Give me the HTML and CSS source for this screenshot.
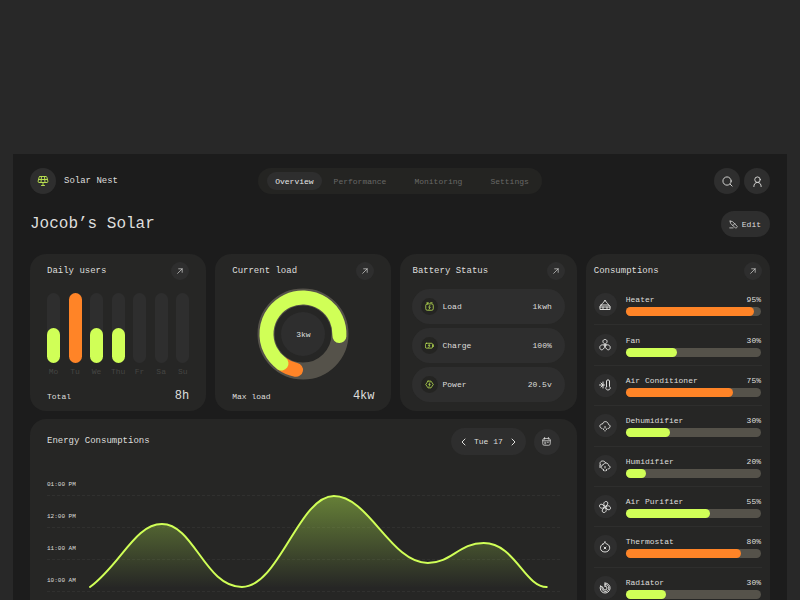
FILE: index.html
```html
<!DOCTYPE html>
<html lang="en">
<head>
    <meta charset="UTF-8">
    <meta name="viewport" content="width=device-width, initial-scale=1.0">
    <title>Solar Nest</title>
    <link rel="stylesheet" href="styles.css">
</head>
<body>
    <!-- shared icons -->
    <svg class="sprite" aria-hidden="true">
        <symbol id="arrow" viewBox="0 0 12 12"><path d="M2.5 9.5 9.3 2.7M4 2.7h5.3V8"/></symbol>
    </svg>

    <div class="app">
        <header class="topbar">
            <div class="brand">
                <span class="logo">
                    <svg viewBox="0 0 24 24"><path d="M6 3h12c1 0 1.600.600 1.800 1.500l2 8c.3 1.400-.5 2.500-1.800 2.500H4c-1.300 0-2.100-1.100-1.800-2.500l2-8C4.400 3.600 5 3 6 3ZM3 9h18M9 3 8 15M15 3l1 12M12 15v6M9 21h6"/></svg>
                </span>
                <span>Solar Nest</span>
            </div>
            <nav class="menu">
                <a class="active" href="#">Overview</a>
                <a href="#">Performance</a>
                <a href="#">Monitoring</a>
                <a href="#">Settings</a>
            </nav>
            <div class="actions">
                <button class="round" aria-label="Search">
                    <svg viewBox="0 0 24 24"><circle cx="11" cy="11" r="9"/><path d="m18 18 4 4"/></svg>
                </button>
                <button class="round" aria-label="Profile">
                    <svg viewBox="0 0 24 24"><circle cx="12" cy="8" r="6"/><path d="M4 23c0-5 3-9 8-9s8 4 8 9"/></svg>
                </button>
            </div>
        </header>

        <div class="heading">
            <h1>Jocob’s Solar</h1>
            <button class="edit">
                <svg viewBox="0 0 24 24"><path d="M3 3 9 4l12 12c2 2 1 3 0 4s-3 2-5 0L4 9 3 3ZM10 15l6-6M2 21h9"/></svg>
                Edit
            </button>
        </div>

        <main class="grid">
            <section class="card">
                <div class="card-head">
                    <h2>Daily users</h2>
                    <button class="open" aria-label="Open daily users"><svg><use href="#arrow"/></svg></button>
                </div>
                <div class="bars">
                    <div class="day"><div class="track"><div class="fill" style="height: 50%"></div></div><span>Mo</span></div>
                    <div class="day"><div class="track"><div class="fill orange" style="height: 100%"></div></div><span>Tu</span></div>
                    <div class="day"><div class="track"><div class="fill" style="height: 50%"></div></div><span>We</span></div>
                    <div class="day"><div class="track"><div class="fill" style="height: 50%"></div></div><span>Thu</span></div>
                    <div class="day"><div class="track"></div><span>Fr</span></div>
                    <div class="day"><div class="track"></div><span>Sa</span></div>
                    <div class="day"><div class="track"></div><span>Su</span></div>
                </div>
                <div class="card-foot"><span>Total</span><strong>8h</strong></div>
            </section>

            <section class="card">
                <div class="card-head">
                    <h2>Current load</h2>
                    <button class="open" aria-label="Open current load"><svg><use href="#arrow"/></svg></button>
                </div>
                <div class="donut">
                    <svg viewBox="-46 -46 92 92">
                        <circle class="ring" r="37"/>
                        <path class="arc orange-arc" d="M-21.500 29.500A36.500 36.500 0 0 0-7 35.800"/>
                        <path class="arc" d="M36.400 2A36.500 36.500 0 1 0-21.500 29.500"/>
                        <circle class="core" r="22"/>
                    </svg>
                    <span>3kw</span>
                </div>
                <div class="card-foot"><span>Max load</span><strong>4kw</strong></div>
            </section>

            <section class="card battery">
                <div class="card-head">
                    <h2>Battery Status</h2>
                    <button class="open" aria-label="Open battery status"><svg><use href="#arrow"/></svg></button>
                </div>
                <ul class="status">
                    <li>
                        <span class="badge"><svg viewBox="0 0 24 24"><rect x="2" y="5" width="20" height="17" rx="4"/><path d="M5 2h4M15 2h4M13 9l-3 5h4l-3 5"/></svg></span>
                        <span>Load</span><b>1kwh</b>
                    </li>
                    <li>
                        <span class="badge"><svg viewBox="0 0 24 24"><rect x="1" y="6" width="19" height="13" rx="3"/><path d="M23 10v5M12 8l-3 4h4l-3 5"/></svg></span>
                        <span>Charge</span><b>100%</b>
                    </li>
                    <li>
                        <span class="badge"><svg viewBox="0 0 24 24"><path d="M8 3h8l2 3 4 6-4 6-2 3H8l-2-3-4-6 4-6 2-3ZM13 7l-3 5h4l-3 5"/></svg></span>
                        <span>Power</span><b>20.5v</b>
                    </li>
                </ul>
            </section>

            <section class="card consumptions">
                <div class="card-head">
                    <h2>Consumptions</h2>
                    <button class="open" aria-label="Open consumptions"><svg><use href="#arrow"/></svg></button>
                </div>
                <ul class="devices">
                    <li>
                        <span class="device-icon"><svg viewBox="0 0 24 24"><path d="M4 12h16l2 3v6H2v-6l2-3ZM2 16h20M8 16v5M16 16v5M5 12c0-3 2-3 4-5l3-5 3 5c2 2 4 2 4 5"/></svg></span>
                        <div class="usage">
                            <div class="usage-text"><span>Heater</span><span>95%</span></div>
                            <div class="meter"><div class="level orange" style="width: 95%"></div></div>
                        </div>
                    </li>
                    <li>
                        <span class="device-icon"><svg viewBox="0 0 24 24"><circle cx="12" cy="12" r="2"/><path d="M11 10C6 7 7 1 12 1s6 6 1 9M10 12c-5-2-10 2-8 7s8 3 10-5M14 12c5-2 10 2 8 7s-8 3-10-5"/></svg></span>
                        <div class="usage">
                            <div class="usage-text"><span>Fan</span><span>30%</span></div>
                            <div class="meter"><div class="level" style="width: 38%"></div></div>
                        </div>
                    </li>
                    <li>
                        <span class="device-icon"><svg viewBox="0 0 24 24"><path d="M15 15V4c0-3 6-3 6 0v11c3 3 1 7-3 7s-6-4-3-7ZM1 12h10M8 6v12M4 8l4 4-4 4"/></svg></span>
                        <div class="usage">
                            <div class="usage-text"><span>Air Conditioner</span><span>75%</span></div>
                            <div class="meter"><div class="level orange" style="width: 79%"></div></div>
                        </div>
                    </li>
                    <li>
                        <span class="device-icon"><svg viewBox="0 0 24 24"><path d="M6 17c-6-1-6-9 1-9 2-7 11-6 12 1 5 1 4 8-1 8M12 13v3M9 18v1M15 18v1M12 21v1"/></svg></span>
                        <div class="usage">
                            <div class="usage-text"><span>Dehumidifier</span><span>30%</span></div>
                            <div class="meter"><div class="level" style="width: 33%"></div></div>
                        </div>
                    </li>
                    <li>
                        <span class="device-icon"><svg viewBox="0 0 24 24"><path d="M7 18c-4-1-4-7 1-8 2-6 11-5 11 1 5 1 4 7-1 7M4 11C0 8 2 2 7 2c3 0 5 1 6 3M2 15v-5M12 13v3M9 19v2M15 19v2M12 21v1"/></svg></span>
                        <div class="usage">
                            <div class="usage-text"><span>Humidifier</span><span>20%</span></div>
                            <div class="meter"><div class="level" style="width: 15%"></div></div>
                        </div>
                    </li>
                    <li>
                        <span class="device-icon"><svg viewBox="0 0 24 24"><circle cx="12" cy="12" r="2"/><path d="M12 10C7 7 10 1 14 1s6 5 0 9M14 12c3-5 9-2 9 2s-5 6-9 0M12 14c5 3 2 9-2 9s-6-5 0-9M10 12c-3 5-9 2-9-2s5-6 9 0"/></svg></span>
                        <div class="usage">
                            <div class="usage-text"><span>Air Purifier</span><span>55%</span></div>
                            <div class="meter"><div class="level" style="width: 62%"></div></div>
                        </div>
                    </li>
                    <li>
                        <span class="device-icon"><svg viewBox="0 0 24 24"><path d="M8 6C0 9 1 22 12 22S24 9 16 6c-3-1-4-2-4-5-1 3-1 4-4 5ZM10 12l4 4M14 12l-4 4"/></svg></span>
                        <div class="usage">
                            <div class="usage-text"><span>Thermostat</span><span>80%</span></div>
                            <div class="meter"><div class="level orange" style="width: 85%"></div></div>
                        </div>
                    </li>
                    <li>
                        <span class="device-icon"><svg viewBox="0 0 24 24"><path d="M12 2a10 10 0 1 1-9 6M12 5a7 7 0 1 1-6 5M12 8a4 4 0 1 1-4 4M12 2v7M3 8l5 3"/></svg></span>
                        <div class="usage">
                            <div class="usage-text"><span>Radiator</span><span>30%</span></div>
                            <div class="meter"><div class="level" style="width: 30%"></div></div>
                        </div>
                    </li>
                </ul>
            </section>

            <section class="card energy">
                <div class="energy-head">
                    <h2>Energy Consumptions</h2>
                    <div class="date">
                        <button aria-label="Previous day"><svg viewBox="0 0 10 10"><path d="M6 2 3 5l3 3"/></svg></button>
                        <span>Tue 17</span>
                        <button aria-label="Next day"><svg viewBox="0 0 10 10"><path d="m4 2 3 3-3 3"/></svg></button>
                    </div>
                    <button class="round calendar" aria-label="Calendar">
                        <svg viewBox="0 0 24 24"><rect x="2" y="4" width="20" height="18" rx="4"/><path d="M7 1v5M17 1v5M2 10h20M7 14h3M14 14h3M7 18h3"/></svg>
                    </button>
                </div>
                <div class="chart">
                    <div class="hour">01:00 PM</div>
                    <div class="hour">12:00 PM</div>
                    <div class="hour">11:00 AM</div>
                    <div class="hour">10:00 AM</div>
                    <svg class="curve" viewBox="0 0 513 128" preserveAspectRatio="none">
                        <defs>
                            <linearGradient id="fade" gradientUnits="userSpaceOnUse" x1="0" y1="32" x2="0" y2="124">
                                <stop offset="0" stop-color="#a5d84a" stop-opacity="0.5"/>
                                <stop offset="1" stop-color="#a5d84a" stop-opacity="0"/>
                            </linearGradient>
                        </defs>
                        <path class="area" d="M43 123C74 100 88 60 115 60C147 60 158 123 195 123C232 123 252 32 287 32C322 32 344 99 381 99C405 99 412 79 437 79C468 79 478 123 500 123Z"/>
                        <path class="line" d="M43 123C74 100 88 60 115 60C147 60 158 123 195 123C232 123 252 32 287 32C322 32 344 99 381 99C405 99 412 79 437 79C468 79 478 123 500 123"/>
                    </svg>
                </div>
            </section>
        </main>
    </div>
</body>
</html>
```
FILE: styles.css
```css
* {
    box-sizing: border-box;
    margin: 0;
    padding: 0;
}

body {
    height: 100vh;
    overflow: hidden;
    padding: 154px 13px 0;
    background: #282828;
    color: #dededc;
    font-family: "Liberation Mono", "Courier New", monospace;
    font-size: 8px;
    line-height: 13px;
}

ul {
    list-style: none;
}

a {
    color: inherit;
    text-decoration: none;
}

button {
    border: none;
    background: #2e2e2e;
    color: inherit;
    font: inherit;
    cursor: pointer;
}

h1,
h2,
strong,
b {
    font-weight: normal;
}

svg {
    display: block;
    fill: none;
    stroke: currentColor;
    stroke-width: 2;
    stroke-linecap: round;
    stroke-linejoin: round;
}

.sprite {
    position: absolute;
    width: 0;
    height: 0;
}

.app {
    padding: 14px 17px;
    background: #1c1c1c;
}

/* Top bar */
.topbar {
    display: grid;
    grid-template-columns: 1fr auto 1fr;
    align-items: center;
}

.brand {
    display: flex;
    align-items: center;
    gap: 8px;
    font-size: 9px;
}

.logo,
.round {
    display: flex;
    align-items: center;
    justify-content: center;
    width: 26px;
    height: 26px;
    border-radius: 50%;
    background: #2e2e2e;
}

.logo svg {
    width: 12px;
    height: 12px;
    color: #b5dc4f;
}

.round svg {
    width: 11px;
    height: 11px;
}

.menu {
    display: flex;
    align-items: center;
    gap: 4px;
    height: 26px;
    padding-left: 9px;
    border-radius: 13px;
    background: #242422;
    color: #686866;
}

.menu a {
    padding: 3px 16px 2px 8px;
    border-radius: 9px;
}

.menu a:last-child {
    padding-right: 13px;
}

.menu a.active {
    padding-right: 8px;
    background: #2e2e2e;
    color: #e6e6e6;
}

.actions {
    display: flex;
    justify-content: flex-end;
    gap: 4px;
}

.heading {
    display: flex;
    align-items: center;
    justify-content: space-between;
    margin: 17px 0;
}

.heading h1 {
    font-size: 16px;
    line-height: 22px;
}

.edit {
    display: flex;
    align-items: center;
    gap: 4px;
    height: 26px;
    padding: 0 9px 0 8px;
    border-radius: 13px;
}

.edit svg {
    width: 9px;
    height: 9px;
}

/* Cards */
.grid {
    display: grid;
    grid-template-columns: 22fr 22fr 22fr 23fr;
    gap: 8px 9px;
}

.card {
    display: flex;
    flex-direction: column;
    min-width: 0;
    padding: 8px 17px;
    border-radius: 16px;
    background: #262625;
}

.card-head {
    display: flex;
    align-items: center;
    justify-content: space-between;
}

h2 {
    font-size: 9px;
    line-height: 13px;
}

.open {
    display: flex;
    align-items: center;
    justify-content: center;
    width: 18px;
    height: 18px;
    border-radius: 50%;
}

.open svg {
    width: 8px;
    height: 8px;
    stroke-width: 1;
}

.card-foot {
    display: flex;
    align-items: center;
    justify-content: space-between;
    margin-top: auto;
}

.card-foot strong {
    font-size: 12px;
    line-height: 14px;
}

/* Daily users */
.bars {
    display: flex;
    justify-content: space-between;
    margin-top: 13px;
}

.day {
    display: flex;
    flex-direction: column;
    align-items: center;
    gap: 2px;
    width: 13px;
    color: #454543;
}

.track {
    display: flex;
    align-items: flex-end;
    width: 13px;
    height: 70px;
    border-radius: 7px;
    background: #2e2e2e;
}

.fill {
    width: 100%;
    border-radius: 7px;
    background: #d0ff57;
}

.orange {
    background: #ff8427;
}

/* Current load */
.donut {
    display: grid;
    place-items: center;
    margin-top: 8px;
}

.donut svg,
.donut span {
    grid-area: 1 / 1;
}

.donut svg {
    width: 92px;
    height: 92px;
}

.ring {
    stroke: #55524a;
    stroke-width: 17;
}

.arc {
    stroke: #d0ff57;
    stroke-width: 14;
}

.orange-arc {
    stroke: #ff8427;
}

.core {
    fill: #2e2e2e;
    stroke: none;
}

/* Battery status */
.battery {
    padding: 8px 12px;
}

.status {
    display: grid;
    gap: 4px;
    margin: 9px 0 1px;
}

.status li {
    display: flex;
    align-items: center;
    gap: 4px;
    height: 35px;
    padding: 0 13px 0 9px;
    border-radius: 18px;
    background: #2e2e2e;
}

.status b {
    margin-left: auto;
}

.badge {
    display: flex;
    align-items: center;
    justify-content: center;
    width: 17px;
    height: 17px;
    border-radius: 50%;
    background: #242422;
    color: #c4ee56;
}

.badge svg {
    width: 9px;
    height: 9px;
}

/* Consumptions */
.consumptions {
    grid-column: 4;
    grid-row: 1 / 3;
    padding: 8px;
}

.devices {
    display: grid;
    flex: 1;
    grid-auto-rows: 1fr;
    margin-top: 5px;
}

.devices li {
    display: flex;
    align-items: center;
    gap: 9px;
    padding-right: 1px;
    border-bottom: 1px solid #2e2e2d;
}

.devices li:last-child {
    border-bottom: none;
}

.device-icon {
    display: flex;
    align-items: center;
    justify-content: center;
    width: 23px;
    height: 23px;
    border-radius: 50%;
    background: #2e2e2e;
}

.device-icon svg {
    width: 12px;
    height: 12px;
}

.usage {
    flex: 1;
}

.usage-text {
    display: flex;
    justify-content: space-between;
}

.meter {
    height: 9px;
    margin-top: 1px;
    border-radius: 5px;
    background: #55524a;
}

.level {
    height: 100%;
    border-radius: 5px;
    background: #d0ff57;
}

.level.orange {
    background: #ff8427;
}

/* Energy chart */
.energy {
    grid-column: 1 / 4;
    padding: 9px 17px 24px;
}

.energy-head {
    display: flex;
    align-items: center;
    gap: 8px;
}

.energy-head h2 {
    margin-right: auto;
}

.date {
    display: flex;
    align-items: center;
    gap: 5px;
    height: 27px;
    padding: 0 8px;
    border-radius: 14px;
    background: #2e2e2e;
}

.date svg {
    width: 10px;
    height: 10px;
    stroke-width: 1;
}

.calendar svg {
    width: 9px;
    height: 9px;
}

.chart {
    position: relative;
    margin-top: 9px;
}

.hour {
    height: 32px;
    padding-top: 14px;
    border-bottom: 1px dashed #30302f;
    font-size: 6px;
}

.curve {
    position: absolute;
    inset: 0;
    width: 100%;
    height: 100%;
}

.area {
    fill: url(#fade);
    stroke: none;
}

.line {
    stroke: #d0ff57;
}
```
